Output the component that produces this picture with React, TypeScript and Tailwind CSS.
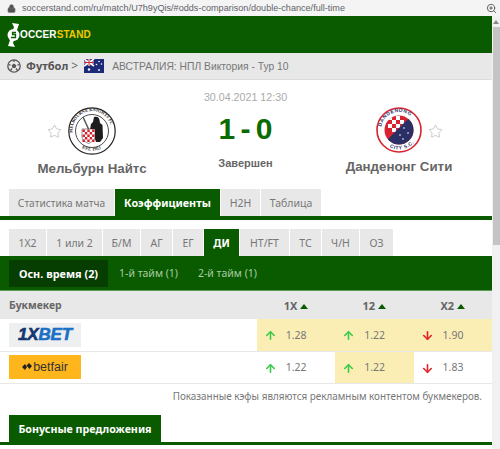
import { ArrowDown, ArrowUp, Lock, Star, ZoomIn } from 'lucide-react';

const SANS = 'font-["Noto_Sans",sans-serif]';

const MATCH_TABS = [
  { label: 'Статистика матча', w: 'w-[105px]', size: 'text-[10.200px]' },
  { label: 'Коэффициенты', w: 'w-[105px]', active: true },
  { label: 'H2H', w: 'w-[39px]' },
  { label: 'Таблица', w: 'w-[60px]' },
];

const MARKET_TABS = [
  { label: '1X2', w: 'w-[37px]' },
  { label: '1 или 2', w: 'w-[55px]' },
  { label: 'Б/М', w: 'w-[37px]' },
  { label: 'АГ', w: 'w-[31px]' },
  { label: 'ЕГ', w: 'w-[30px]' },
  { label: 'ДИ', w: 'w-[35px]', active: true },
  { label: 'HT/FT', w: 'w-[49px]' },
  { label: 'ТС', w: 'w-[31px]' },
  { label: 'Ч/Н', w: 'w-[37px]' },
  { label: 'ОЗ', w: 'w-[33px]' },
];

const ODDS = [
  {
    logo: 'xbet',
    cells: [
      { value: '1.28', up: true, hl: true },
      { value: '1.22', up: true, hl: true },
      { value: '1.90', up: false, hl: true },
    ],
  },
  {
    logo: 'betfair',
    cells: [
      { value: '1.22', up: true, hl: false },
      { value: '1.22', up: true, hl: true },
      { value: '1.83', up: false, hl: false },
    ],
  },
];

function FlagAU() {
  return (
    <svg width="20" height="14" viewBox="0 0 20 14" className="shrink-0">
      <rect width="20" height="14" fill="#1c2a78" />
      <path d="M0 0l10 7M10 0L0 7" stroke="#fff" strokeWidth="1.6" />
      <path d="M5 0v7M0 3.500h10" stroke="#fff" strokeWidth="2.200" />
      <path d="M5 0v7M0 3.500h10" stroke="#d8283c" strokeWidth="1.100" />
      <circle cx="5" cy="10.500" r="1.200" fill="#fff" />
      <circle cx="15" cy="2.500" r=".8" fill="#fff" />
      <circle cx="12.500" cy="5.500" r=".8" fill="#fff" />
      <circle cx="17.500" cy="5" r=".8" fill="#fff" />
      <circle cx="15" cy="11" r=".9" fill="#fff" />
    </svg>
  );
}

function SoccerBall() {
  return (
    <svg width="14" height="14" viewBox="0 0 14 14" className="shrink-0">
      <circle cx="7" cy="7" r="6.200" fill="#e8e8e8" stroke="#555" strokeWidth="1.300" />
      <path d="M7 4.600l2.300 1.700-.9 2.700H5.600l-.9-2.700z" fill="#555" />
      <path d="M7 1v2M1.500 5.500l2 .7M12.500 5.500l-2 .7M3.500 11.500l1.500-2M10.500 11.500l-1.500-2" stroke="#555" strokeWidth="1.300" />
    </svg>
  );
}

function KnightsCrest() {
  return (
    <svg width="48" height="48" viewBox="0 0 48 48" className="block">
      <defs>
        <path id="knights-top" d="M5 28a19.500 19.500 0 1 1 38 0" />
        <path id="knights-bottom" d="M10 38a20 20 0 0 0 28 0" />
      </defs>
      <circle cx="24" cy="24" r="23.200" fill="#fff" stroke="#222" strokeWidth="1.200" />
      <circle cx="24" cy="24" r="16.500" fill="#fff" stroke="#222" strokeWidth=".8" />
      <text fontSize="4.400" fontFamily="Liberation Serif, serif" fontWeight="700" fill="#222">
        <textPath href="#knights-top" startOffset="3%">MELBOURNE KNIGHTS FC</textPath>
      </text>
      <text fontSize="4.600" fontFamily="Liberation Serif, serif" fontWeight="700" fill="#222">
        <textPath href="#knights-bottom" startOffset="16%">EST. 1953</textPath>
      </text>
      {/* knight body */}
      <path d="M26 10c3-1 5 0 5.500 3l.5 3 2.500 2 .5 13-3 4h-4l-2-6-4-6 1-6 2-2z" fill="#1d1d1d" />
      <path d="M15 10l6 13" stroke="#555" strokeWidth="1.500" />
      <path d="M14 22h13v8c0 3-3.500 5-6.500 6.500C17.500 35 14 33 14 30z" fill="#fff" stroke="#222" strokeWidth=".5" />
      {[0, 1, 2, 3, 4].flatMap((r) =>
        [0, 1, 2, 3, 4].map((c) =>
          (r + c) % 2 === 0 ? (
            <rect key={`${r}-${c}`} x={14.500 + c * 2.400} y={22.500 + r * 2.500} width="2.400" height="2.500" fill="#d5202c" />
          ) : null,
        ),
      )}
    </svg>
  );
}

function DandenongCrest() {
  return (
    <svg width="46" height="46" viewBox="0 0 46 46" className="block">
      <defs>
        <path id="dand-top" d="M5.500 26a17.800 17.800 0 1 1 35 0" />
        <path id="dand-bottom" d="M6 33a20 20 0 0 0 34 0" />
        <clipPath id="dand-clip">
          <circle cx="23" cy="23" r="14.500" />
        </clipPath>
      </defs>
      <circle cx="23" cy="23" r="22" fill="#fff" stroke="#d8242f" strokeWidth="1.600" />
      <text fontSize="5" fontFamily="Liberation Sans, sans-serif" fontWeight="700" fill="#2a2f66" letterSpacing=".5">
        <textPath href="#dand-top" startOffset="10%">DANDENONG</textPath>
      </text>
      <text fontSize="5" fontFamily="Liberation Sans, sans-serif" fontWeight="700" fill="#2a2f66" letterSpacing=".5">
        <textPath href="#dand-bottom" startOffset="26%">CITY S.C.</textPath>
      </text>
      <g clipPath="url(#dand-clip)">
        <rect x="8" y="8" width="30" height="30" fill="#d8242f" />
        {[0, 1, 2, 3].flatMap((r) =>
          [0, 1, 2, 3].map((c) =>
            (r + c) % 2 === 0 ? (
              <rect key={`${r}-${c}`} x={12 + c * 4} y={9 + r * 4} width="4" height="4" fill="#fff" />
            ) : null,
          ),
        )}
        <path d="M8 38V36L33 11l6 4v23z" fill="#2a2f66" />
        <circle cx="28" cy="21" r=".8" fill="#fff" />
        <circle cx="32" cy="26" r=".8" fill="#fff" />
        <circle cx="24" cy="28" r=".8" fill="#fff" />
        <circle cx="27" cy="32" r=".8" fill="#fff" />
      </g>
    </svg>
  );
}

function XBetLogo() {
  return (
    <div className="flex h-6 w-[72px] items-center justify-center bg-[#eeeff1]">
      <span className='font-["Liberation_Sans",sans-serif] text-[17px] leading-none font-bold tracking-[-0.2px] text-[#1a6fc4] italic [-webkit-text-stroke:0.6px_#1a6fc4]'>
        <span className="text-[#14386e] [-webkit-text-stroke:0.6px_#14386e]">1X</span>BET
      </span>
    </div>
  );
}

function BetfairLogo() {
  return (
    <div className="flex h-6 w-[72px] items-center justify-center gap-[1px] bg-[#ffb61c]">
      <svg width="10" height="8" viewBox="0 0 10 8">
        <path d="M0 4l3-3 2 3-2 3zM4.500 2.500L7 0l3 3-2.500 3z" fill="#222" />
      </svg>
      <span className='font-["Liberation_Sans",sans-serif] text-[12.500px] leading-none text-[#333]'>betfair</span>
    </div>
  );
}

function Team({ name, crest, starLeft }: { name: string; crest: React.ReactNode; starLeft?: boolean }) {
  return (
    <div className="flex w-[166px] flex-col items-center">
      <div className="relative">
        <Star
          className={`absolute top-[17px] h-[15px] w-[15px] text-[#aaa] ${starLeft ? '-left-[21px]' : '-right-[21px]'}`}
          strokeWidth={1}
        />
        {crest}
      </div>
      <div className='mt-[6px] font-["Liberation_Sans",sans-serif] text-[13.300px] leading-[16px] font-bold whitespace-nowrap text-[#666]'>
        {name}
      </div>
    </div>
  );
}

export default function App() {
  return (
    <div className={`flex h-[449px] w-[500px] flex-col overflow-hidden bg-white ${SANS}`}>
      {/* browser address bar */}
      <div className='flex h-4 shrink-0 items-center justify-between bg-[#f4f4f5] pr-[3px] pl-[7px] font-["Liberation_Sans",sans-serif]'>
        <div className="flex items-center gap-[6px]">
          <Lock className="h-[9px] w-[9px] fill-[#555] text-[#555]" />
          <span className="text-[9.100px] leading-4 whitespace-nowrap text-[#5f6368]">
            soccerstand.com/ru/match/U7h9yQis/#odds-comparison/double-chance/full-time
          </span>
        </div>
        <ZoomIn className="h-[11px] w-[11px] text-[#555]" />
      </div>

      <div className="flex min-h-0 flex-1">
        <main className="w-[492px] shrink-0 overflow-hidden">
          {/* site header */}
          <header className="flex h-[37px] items-center bg-[#0a5b00] pl-[7px]">
            <svg width="13" height="24" viewBox="0 0 13 24" className="shrink-0">
              <path d="M5 0l7 1-2 6H6l1-3zM8 24l-7-1 2-6h4l-1 3z" fill="#fff" />
              <circle cx="6.500" cy="12" r="6" fill="#fff" />
              <path d="M9 9.500H5.500v2H8.500v3H4" fill="none" stroke="#0a5b00" strokeWidth="1.300" />
            </svg>
            <span className='font-["Liberation_Sans",sans-serif] text-[10px] font-bold tracking-[0.1px] text-white'>
              OCCER<span className="text-[#f6c700]">STAND</span>
            </span>
          </header>

          {/* breadcrumb */}
          <div className="flex h-[27px] items-center border-b border-[#dcdcdc] bg-[#e8e8e8] pl-[7px] text-[11px] text-[#666]">
            <SoccerBall />
            <span className="ml-[5px] font-bold text-[#555]">Футбол</span>
            <span className="mr-[6px] ml-[3px] text-[12px] text-[#666]">&gt;</span>
            <FlagAU />
            <span className='ml-2 pt-[1px] font-["Liberation_Sans",sans-serif] text-[10.300px] whitespace-nowrap text-[#777]'>
              АВСТРАЛИЯ: НПЛ Виктория - Тур 10
            </span>
          </div>

          {/* match summary */}
          <section className="flex h-[109px] items-start justify-between pt-[27px] pr-[10px] pl-[9px]">
            <Team name="Мельбурн Найтс" crest={<KnightsCrest />} starLeft />
            <div className="-mt-[16px] flex flex-col items-center">
              <div className='font-["Liberation_Sans",sans-serif] text-[10.700px] leading-[13px] text-[#aaa]'>30.04.2021 12:30</div>
              <div className='mt-[7px] font-["Liberation_Sans",sans-serif] text-[30px] leading-[36px] font-bold [word-spacing:-3px] text-[#0a6b00]'>1 - 0</div>
              <div className='mt-[10px] font-["Liberation_Sans",sans-serif] text-[11px] leading-[13px] font-bold text-[#666]'>Завершен</div>
            </div>
            <Team name="Данденонг Сити" crest={<DandenongCrest />} />
          </section>

          {/* match tabs */}
          <nav className="flex h-[27px] gap-[1px] pl-[9px] text-[10.500px]">
            {MATCH_TABS.map((t) => (
              <div
                key={t.label}
                className={`flex items-center justify-center pt-[2px] whitespace-nowrap ${t.w} ${t.size ?? ''} ${
                  t.active ? 'bg-[#0a5b00] text-[10.800px] font-bold text-white' : 'bg-[#e8e8e8] text-[#777]'
                }`}
              >
                {t.label}
              </div>
            ))}
          </nav>
          <div className="h-1 bg-[#0a5b00]" />

          {/* market tabs */}
          <nav className="mt-[9px] flex h-[27px] gap-[1px] pl-[9px] text-[10.500px]">
            {MARKET_TABS.map((t) => (
              <div
                key={t.label}
                className={`flex items-center justify-center pt-[2px] whitespace-nowrap ${t.w} ${
                  t.active ? 'bg-[#0a5b00] font-bold text-white' : 'bg-[#e8e8e8] text-[#777]'
                }`}
              >
                {t.label}
              </div>
            ))}
          </nav>

          {/* period tabs */}
          <div className="flex h-[34px] items-center bg-[#0a5b00] pl-[9px] text-[10.500px]">
            <div className="flex h-[27px] w-[99px] items-center justify-center bg-[#063d00] pt-[2px] text-[10.900px] font-bold whitespace-nowrap text-white">
              Осн. время (2)
            </div>
            <span className="ml-[11px] pt-[2px] whitespace-nowrap text-[#a9cda4]">1-й тайм (1)</span>
            <span className="ml-5 pt-[2px] whitespace-nowrap text-[#a9cda4]">2-й тайм (1)</span>
          </div>

          {/* odds table */}
          <div className="flex h-[29px] items-center border-t border-[#5b9a52] bg-[#e8e8e8] pt-[2px] pl-[9px] text-[10.400px] font-bold text-[#666]">
            <div className="w-[248px]">Букмекер</div>
            {['1X', '12', 'X2'].map((h) => (
              <div key={h} className="flex w-[78.500px] items-center justify-center gap-[3px] text-[11px]">
                {h}
                <span className="h-0 w-0 border-x-[4px] border-b-[5px] border-x-transparent border-b-[#0a5b00]" />
              </div>
            ))}
          </div>
          {ODDS.map((row) => (
            <div key={row.logo} className="flex h-[32.500px] border-b border-[#e8e8e8] pl-[9px]">
              <div className="flex w-[248px] items-center">
                {row.logo === 'xbet' ? <XBetLogo /> : <BetfairLogo />}
              </div>
              {row.cells.map((c, i) => (
                <div key={i} className={`flex w-[78.500px] items-center pt-[2px] pl-[7px] ${c.hl ? 'bg-[#fbeeb5]' : ''}`}>
                  {c.up ? (
                    <ArrowUp className="h-[13px] w-[13px] text-[#3ccb4a]" strokeWidth={3} />
                  ) : (
                    <ArrowDown className="h-[13px] w-[13px] text-[#e0242c]" strokeWidth={3} />
                  )}
                  <span className="ml-[9px] text-[10.500px] text-[#777]">{c.value}</span>
                </div>
              ))}
            </div>
          ))}

          <p className="mt-[5px] pr-[10px] text-right text-[9.900px] leading-[14px] whitespace-nowrap text-[#777]">
            Показанные кэфы являются рекламным контентом букмекеров.
          </p>

          {/* bonus section */}
          <div className="mt-[12px] border-b-[3px] border-[#0a5b00] pl-[9px]">
            <div className="flex h-[27px] w-[152px] items-center justify-center bg-[#0a5b00] pt-[2px] text-[10.700px] font-bold whitespace-nowrap text-white">
              Бонусные предложения
            </div>
          </div>
        </main>

        {/* page scrollbar */}
        <div className="flex w-2 shrink-0 flex-col bg-[#f1f1f1]">
          <div className="flex h-[11px] items-center justify-center">
            <span className="h-0 w-0 border-x-[3px] border-b-[4px] border-x-transparent border-b-[#888]" />
          </div>
          <div className="ml-[1px] h-[218px] bg-[#c4c4c4]" />
        </div>
      </div>
    </div>
  );
}
